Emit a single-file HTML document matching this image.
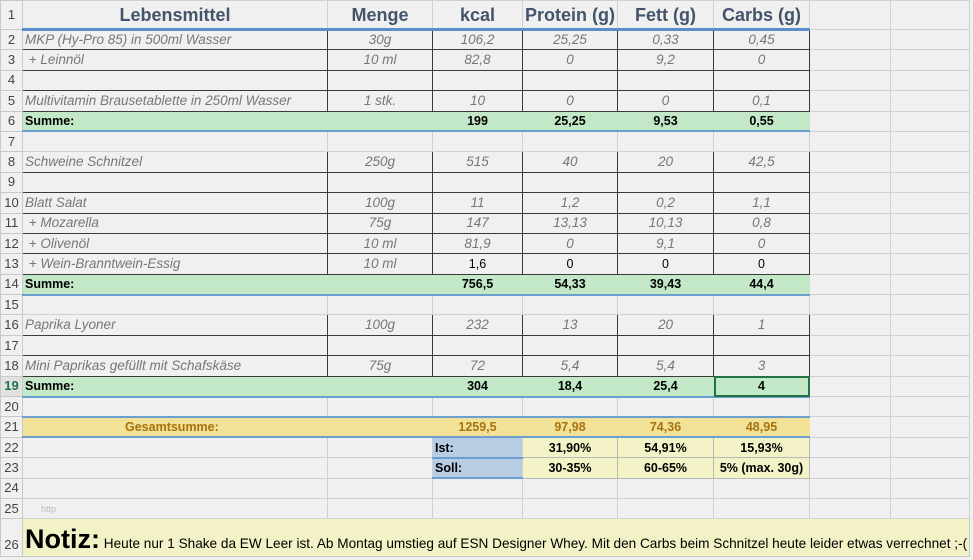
<!DOCTYPE html><html><head><meta charset="utf-8"><style>
body{margin:0;width:973px;height:560px;overflow:hidden;background:#f0f0f0;font-family:"Liberation Sans",sans-serif}
table{border-collapse:collapse;table-layout:fixed;position:absolute;left:0;top:0;width:969px}
td{box-sizing:border-box;border:1px solid #d0d0d0;padding:0 2px;font-size:13.5px;white-space:nowrap;overflow:hidden;height:20.4px;line-height:14px;text-align:center;color:#777;font-style:italic}
td.h{background:#f0f0f0;color:#444;font-style:normal;font-size:13px;text-align:center;border-color:#c8c8c8;padding:0}
td.l{text-align:left}
tr.d td.c{border:1px solid #3a3a3a}
tr.s td.c{background:#c3e8c8;color:#000;font-weight:bold;font-style:normal;font-size:12.5px;border-left-color:#c3e8c8;border-right-color:#c3e8c8;border-bottom:2px solid #6a9fd0}
tr.s td.c:first-child{border-left-color:#c8c8c8}
.hd td.c{font-size:18px;font-weight:bold;color:#44546a;font-style:normal;border-bottom:3px solid #5b8fc9}
tr.g td.c{background:#f2e298;color:#a8720c;font-weight:bold;font-style:normal;font-size:12.5px;border-left-color:#f2e298;border-right-color:#f2e298;border-top:2px solid #6a9fd0;border-bottom:2px solid #6a9fd0}
td.y{background:#f4f3c8;color:#000;font-weight:bold;font-style:normal;font-size:12.5px;border-color:#b8b8b8}
td.b{background:#b8cde4;color:#000;font-weight:bold;font-style:normal;font-size:12.5px;text-align:left;border-bottom:2px solid #6a9fd0}
td.n{background:#f3f1c6;color:#000;font-style:normal;text-align:left;font-size:13.6px;vertical-align:bottom;padding-bottom:3px;border-color:#c8c8c8}
.k{color:#000!important;font-style:normal!important;font-size:12.5px!important}
</style></head><body>
<table>
<colgroup><col style="width:22px"><col style="width:305px"><col style="width:105px"><col style="width:90px"><col style="width:95px"><col style="width:96px"><col style="width:96px"><col style="width:81px"><col style="width:79px"></colgroup>
<tr class="hd"><td class="h" style="height:29px">1</td><td class="c">Lebensmittel</td><td class="c">Menge</td><td class="c">kcal</td><td class="c">Protein (g)</td><td class="c">Fett (g)</td><td class="c">Carbs (g)</td><td></td><td></td></tr>
<tr class="d"><td class="h">2</td><td class="c l">MKP (Hy-Pro 85) in 500ml Wasser</td><td class="c">30g</td><td class="c">106,2</td><td class="c">25,25</td><td class="c">0,33</td><td class="c">0,45</td><td></td><td></td></tr>
<tr class="d"><td class="h">3</td><td class="c l">&nbsp;+ Leinnöl</td><td class="c">10 ml</td><td class="c">82,8</td><td class="c">0</td><td class="c">9,2</td><td class="c">0</td><td></td><td></td></tr>
<tr class="d"><td class="h">4</td><td class="c"></td><td class="c"></td><td class="c"></td><td class="c"></td><td class="c"></td><td class="c"></td><td></td><td></td></tr>
<tr class="d"><td class="h">5</td><td class="c l">Multivitamin Brausetablette in 250ml Wasser</td><td class="c">1 stk.</td><td class="c">10</td><td class="c">0</td><td class="c">0</td><td class="c">0,1</td><td></td><td></td></tr>
<tr class="s"><td class="h">6</td><td class="c l">Summe:</td><td class="c"></td><td class="c">199</td><td class="c">25,25</td><td class="c">9,53</td><td class="c">0,55</td><td></td><td></td></tr>
<tr><td class="h">7</td><td></td><td></td><td></td><td></td><td></td><td></td><td></td><td></td></tr>
<tr class="d"><td class="h">8</td><td class="c l">Schweine Schnitzel</td><td class="c">250g</td><td class="c">515</td><td class="c">40</td><td class="c">20</td><td class="c">42,5</td><td></td><td></td></tr>
<tr class="d"><td class="h">9</td><td class="c"></td><td class="c"></td><td class="c"></td><td class="c"></td><td class="c"></td><td class="c"></td><td></td><td></td></tr>
<tr class="d"><td class="h">10</td><td class="c l">Blatt Salat</td><td class="c">100g</td><td class="c">11</td><td class="c">1,2</td><td class="c">0,2</td><td class="c">1,1</td><td></td><td></td></tr>
<tr class="d"><td class="h">11</td><td class="c l">&nbsp;+ Mozarella</td><td class="c">75g</td><td class="c">147</td><td class="c">13,13</td><td class="c">10,13</td><td class="c">0,8</td><td></td><td></td></tr>
<tr class="d"><td class="h">12</td><td class="c l">&nbsp;+ Olivenöl</td><td class="c">10 ml</td><td class="c">81,9</td><td class="c">0</td><td class="c">9,1</td><td class="c">0</td><td></td><td></td></tr>
<tr class="d"><td class="h">13</td><td class="c l">&nbsp;+ Wein-Branntwein-Essig</td><td class="c">10 ml</td><td class="c k">1,6</td><td class="c k">0</td><td class="c k">0</td><td class="c k">0</td><td></td><td></td></tr>
<tr class="s"><td class="h">14</td><td class="c l">Summe:</td><td class="c"></td><td class="c">756,5</td><td class="c">54,33</td><td class="c">39,43</td><td class="c">44,4</td><td></td><td></td></tr>
<tr><td class="h">15</td><td></td><td></td><td></td><td></td><td></td><td></td><td></td><td></td></tr>
<tr class="d"><td class="h">16</td><td class="c l">Paprika Lyoner</td><td class="c">100g</td><td class="c">232</td><td class="c">13</td><td class="c">20</td><td class="c">1</td><td></td><td></td></tr>
<tr class="d"><td class="h">17</td><td class="c"></td><td class="c"></td><td class="c"></td><td class="c"></td><td class="c"></td><td class="c"></td><td></td><td></td></tr>
<tr class="d"><td class="h">18</td><td class="c l">Mini Paprikas gefüllt mit Schafskäse</td><td class="c">75g</td><td class="c">72</td><td class="c">5,4</td><td class="c">5,4</td><td class="c">3</td><td></td><td></td></tr>
<tr class="s"><td class="h" style="color:#217346;font-weight:bold;background:#e1e1e1">19</td><td class="c l">Summe:</td><td class="c"></td><td class="c">304</td><td class="c">18,4</td><td class="c">25,4</td><td class="c" style="outline:2px solid #217346;outline-offset:-2px">4</td><td></td><td></td></tr>
<tr><td class="h">20</td><td></td><td></td><td></td><td></td><td></td><td></td><td></td><td></td></tr>
<tr class="g"><td class="h">21</td><td class="c" style="text-align:left;padding-left:102px">Gesamtsumme:</td><td class="c"></td><td class="c">1259,5</td><td class="c">97,98</td><td class="c">74,36</td><td class="c">48,95</td><td></td><td></td></tr>
<tr><td class="h">22</td><td></td><td></td><td class="b">Ist:</td><td class="y">31,90%</td><td class="y">54,91%</td><td class="y">15,93%</td><td></td><td></td></tr>
<tr><td class="h">23</td><td></td><td></td><td class="b">Soll:</td><td class="y">30-35%</td><td class="y">60-65%</td><td class="y">5% (max. 30g)</td><td></td><td></td></tr>
<tr><td class="h">24</td><td></td><td></td><td></td><td></td><td></td><td></td><td></td><td></td></tr>
<tr><td class="h">25</td><td class="l" style="font-size:9px;color:#bbb;font-style:normal;padding-left:18px">http</td><td></td><td></td><td></td><td></td><td></td><td></td><td></td></tr>
<tr><td class="h" style="height:38px;vertical-align:bottom;padding-bottom:4px">26</td><td class="n" colspan="8"><span style="font-size:27px;font-weight:bold;line-height:27px">Notiz:</span> Heute nur 1 Shake da EW Leer ist. Ab Montag umstieg auf ESN Designer Whey. Mit den Carbs beim Schnitzel heute leider etwas verrechnet ;-(</td></tr>
</table>
</body></html>
